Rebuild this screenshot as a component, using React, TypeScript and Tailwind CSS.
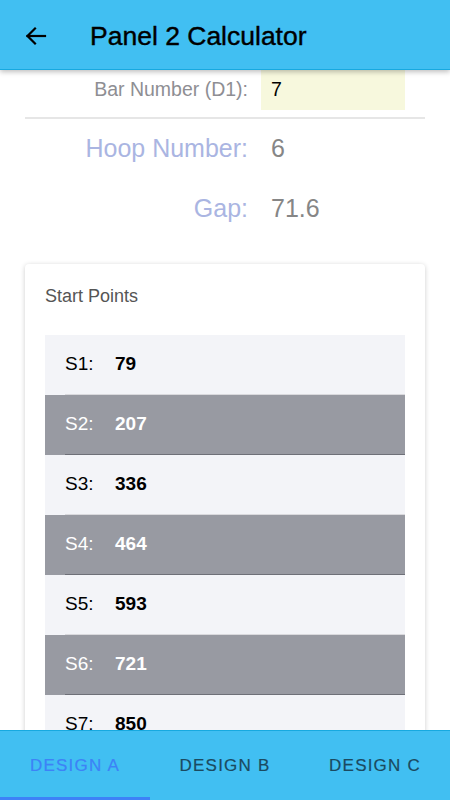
import React from "react";

const rows = [
  { k: "S1:", v: "79" },
  { k: "S2:", v: "207" },
  { k: "S3:", v: "336" },
  { k: "S4:", v: "464" },
  { k: "S5:", v: "593" },
  { k: "S6:", v: "721" },
  { k: "S7:", v: "850" },
];

export default function App() {
  return (
    <div
      className="w-[450px] h-[800px] flex flex-col bg-white overflow-hidden relative"
      style={{ fontFamily: '"Liberation Sans", Arial, sans-serif' }}
    >
      <header className="h-[70px] shrink-0 bg-[#41bff2] border-b border-[#17a9e0] flex items-center pt-[2px] shadow-[0_2px_5px_rgba(0,0,0,0.25)] relative z-10">
        <div className="w-[90px] pl-[24px] flex items-center">
          <svg width="24" height="24" viewBox="0 0 24 24" fill="none" stroke="#000" strokeWidth="2.2" strokeLinecap="square">
            <path d="M21 12H3.5" />
            <path d="M11 4.5L3.5 12L11 19.5" />
          </svg>
        </div>
        <h1 className="text-[26.5px] font-normal text-black leading-none mt-[2px] [-webkit-text-stroke:0.4px_#000]">Panel 2 Calculator</h1>
      </header>

      <main className="flex-1 overflow-hidden">
        <div className="px-[25px]">
          <div className="flex h-[40px] items-center">
            <div className="w-[223px] text-right text-[19.5px] text-[#8e8e93]">Bar Number (D1):</div>
            <div className="ml-[13px] w-[144px] h-full bg-[#f7f8dd] pl-[10px] flex items-center text-[19.5px] text-black">7</div>
          </div>
          <div className="mt-[7px] h-[2px] bg-[#e6e6e6]" />
          <div className="flex h-[60px] items-center">
            <div className="w-[223px] text-right text-[25px] text-[#aab5e2]">Hoop Number:</div>
            <div className="ml-[23px] text-[25px] text-[#868686]">6</div>
          </div>
          <div className="flex h-[60px] items-center">
            <div className="w-[223px] text-right text-[25px] text-[#aab5e2]">Gap:</div>
            <div className="ml-[23px] text-[25px] text-[#868686]">71.6</div>
          </div>

          <div className="mt-[25px] bg-white rounded-[4px] shadow-[0_1px_5px_rgba(0,0,0,0.2)] px-[20px] pt-[20px]">
            <div className="text-[18px] text-[#555] leading-[24px] h-[24px]">Start Points</div>
            <div className="mt-[27px]">
              {rows.map((r, i) => {
                const dark = i % 2 === 1;
                return (
                  <div
                    key={r.k}
                    className={dark ? "h-[60px] bg-[#989aa2] pl-[20px]" : "h-[60px] bg-[#f3f4f8] pl-[20px]"}
                  >
                    <div
                      className={
                        dark
                          ? "h-full flex items-center border-b border-[#6e7078] text-white text-[19px]"
                          : "h-full flex items-center border-b border-[#d9d9dd] text-black text-[19px]"
                      }
                    >
                      <span className="w-[50px]">{r.k}</span>
                      <span className="font-bold">{r.v}</span>
                    </div>
                  </div>
                );
              })}
            </div>
          </div>
        </div>
      </main>

      <nav className="h-[70px] shrink-0 bg-[#41bff2] border-t border-[#17a9e0] flex relative z-10">
        {["DESIGN A", "DESIGN B", "DESIGN C"].map((t, i) => (
          <div key={t} className="flex-1 relative flex items-center justify-center">
            <span
              className={
                i === 0
                  ? "text-[17px] tracking-[1.2px] text-[#3d82f7] [-webkit-text-stroke:0.2px_#3d82f7]"
                  : "text-[17px] tracking-[1.2px] text-[#1b4a60] [-webkit-text-stroke:0.2px_#1b4a60]"
              }
            >
              {t}
            </span>
            {i === 0 && <div className="absolute left-0 right-0 bottom-0 h-[3px] bg-[#3d82f7]" />}
          </div>
        ))}
      </nav>
    </div>
  );
}
